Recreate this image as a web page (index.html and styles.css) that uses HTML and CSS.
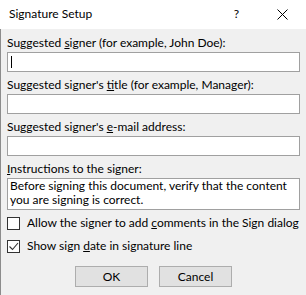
FILE: index.html
```html
<!DOCTYPE html>
<html>
<head>
<meta charset="utf-8">
<link rel="stylesheet" href="styles.css">
</head>
<body>
<div class="dialog">
  <div class="titlebar">
    <span class="title">Signature Setup</span>
    <span class="help">?</span>
    <svg class="close" width="11" height="11" viewBox="0 0 11 11"><path d="M0.5 0.5 L10.5 10.5 M10.5 0.5 L0.5 10.5" stroke="#000" stroke-width="1" fill="none"/></svg>
  </div>
  <div class="content">
    <div class="field">
      <div class="label">Suggested <u>s</u>igner (for example, John Doe):</div>
      <div class="textbox"><span class="caret"></span></div>
    </div>
    <div class="field">
      <div class="label">Suggested signer's <u>t</u>itle (for example, Manager):</div>
      <div class="textbox"></div>
    </div>
    <div class="field">
      <div class="label">Suggested signer's <u>e</u>-mail address:</div>
      <div class="textbox"></div>
    </div>
    <div class="field">
      <div class="label"><u>I</u>nstructions to the signer:</div>
      <div class="textarea">Before signing this document, verify that the content you are signing is correct.</div>
    </div>
    <div class="check-row first">
      <span class="checkbox"></span>
      <span class="check-label">Allow the signer to add <u>c</u>omments in the Sign dialog</span>
    </div>
    <div class="check-row">
      <span class="checkbox"><svg width="11" height="11" viewBox="0 0 11 11"><path d="M1.5 5.5 L4.5 8.5 L10 2" stroke="#333" stroke-width="1.1" fill="none"/></svg></span>
      <span class="check-label">Show sign <u>d</u>ate in signature line</span>
    </div>
    <div class="buttons">
      <div class="button">OK</div>
      <div class="button">Cancel</div>
    </div>
  </div>
</div>
</body>
</html>
```
FILE: styles.css
```css
html, body {
  margin: 0;
  padding: 0;
}
body {
  width: 306px;
  height: 295px;
  overflow: hidden;
  font-family: Lato, "Noto Sans", sans-serif;
  font-size: 12px;
  color: #000;
  background: #f0f0f0;
}
.dialog {
  width: 306px;
  height: 295px;
  display: flex;
  flex-direction: column;
}
.titlebar {
  height: 29px;
  flex: none;
  background: #fff;
  display: flex;
  align-items: center;
  box-sizing: border-box;
  padding: 0 0 1px 9px;
}
.title {
  font-size: 12px;
  line-height: 16px;
  flex: 1;
}
.help {
  font-size: 12px;
  line-height: 16px;
  margin-right: 38px;
}
.close {
  margin-right: 18px;
  display: block;
}
.content {
  flex: 1;
  border-left: 1px solid #8c8c8c;
  padding: 6px 6px 0 6px;
  display: flex;
  flex-direction: column;
}
.field {
  display: flex;
  flex-direction: column;
  gap: 1px;
  margin-bottom: 5px;
}
.label {
  line-height: 16px;
  height: 16px;
  white-space: nowrap;
}
u {
  text-decoration-thickness: 1px;
  text-underline-offset: 1px;
}
.textbox {
  height: 20px;
  box-sizing: border-box;
  border: 1px solid #a0a0a0;
  background: #fff;
  padding: 3px 2px;
}
.caret {
  display: block;
  width: 1px;
  height: 12px;
  background: #000;
  margin-left: 1px;
}
.textarea {
  height: 32px;
  box-sizing: border-box;
  border: 1px solid #a0a0a0;
  background: #fff;
  padding: 0 2px;
  line-height: 14px;
}
.check-row {
  display: flex;
  align-items: flex-start;
  height: 16px;
  line-height: 16px;
  margin-top: 7px;
}
.check-row.first {
  margin-top: 0;
}
.checkbox {
  width: 13px;
  height: 13px;
  box-sizing: border-box;
  border: 1px solid #333;
  background: #fff;
  margin-top: 2px;
  margin-right: 7px;
  flex: none;
  display: block;
}
.checkbox svg {
  display: block;
}
.check-label {
  white-space: nowrap;
}
.buttons {
  display: flex;
  justify-content: center;
  gap: 11px;
  margin-top: 12px;
}
.button {
  width: 73px;
  height: 21px;
  box-sizing: border-box;
  border: 1px solid #adadad;
  background: #e1e1e1;
  text-align: center;
  line-height: 19px;
}
```
